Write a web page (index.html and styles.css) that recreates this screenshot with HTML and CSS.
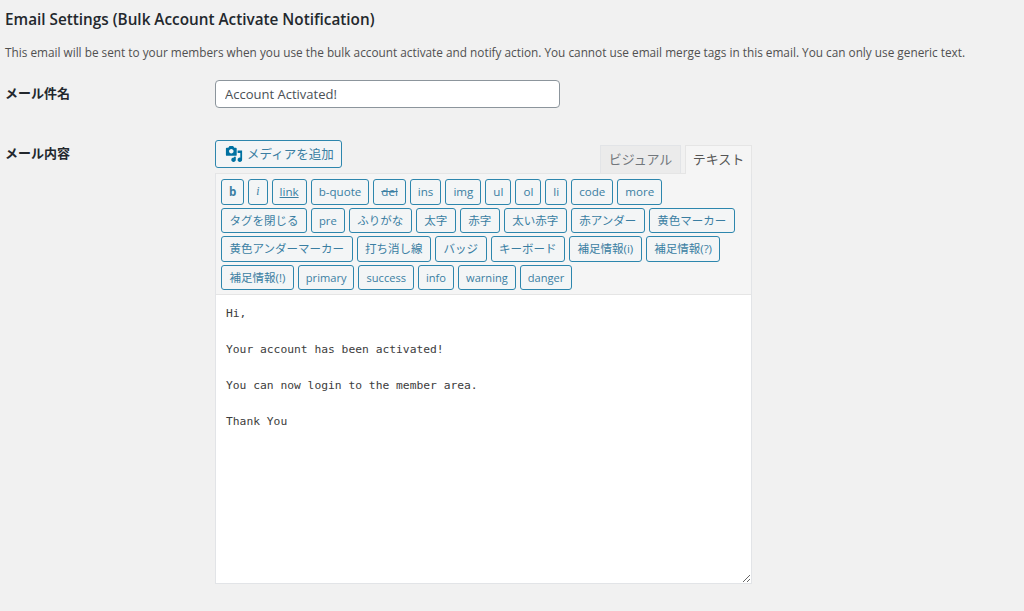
FILE: index.html
```html
<!DOCTYPE html>
<html lang="ja">
<head>
<meta charset="utf-8">
<title>Email Settings</title>
<link rel="stylesheet" href="styles.css">
</head>
<body>
<h2 class="title">Email Settings (Bulk Account Activate Notification)</h2>
<p class="desc">This email will be sent to your members when you use the bulk account activate and notify action. You cannot use email merge tags in this email. You can only use generic text.</p>
<div class="form-row subject-row">
  <label class="field-label">メール件名</label>
  <input class="subject" type="text" value="Account Activated!">
</div>
<div class="form-row">
  <label class="field-label body-label">メール内容</label>
  <div class="editor">
    <div class="editor-head">
      <button class="media-btn" type="button">
        <svg class="media-icon" viewBox="0 0 20 20" width="18" height="18" aria-hidden="true"><path d="M13 11V4c0-.55-.45-1-1-1h-1.670L9 1H5L3.670 3H2c-.55 0-1 .45-1 1v7c0 .55.45 1 1 1h10c.55 0 1-.45 1-1zM7 4.500c1.380 0 2.500 1.120 2.500 2.500S8.380 9.500 7 9.500 4.500 8.380 4.500 7 5.620 4.500 7 4.500zM14 6h5v10.500c0 1.380-1.120 2.500-2.500 2.500S14 17.880 14 16.500s1.120-2.500 2.500-2.500c.17 0 .34.020.5.050V9h-3V6zm-4 8.050V13h2v3.500c0 1.380-1.120 2.500-2.500 2.500S7 17.880 7 16.500 8.120 14 9.500 14c.17 0 .34.020.5.050z" fill="#0071a1"/></svg>
        <span>メディアを追加</span>
      </button>
      <div class="tabs">
        <span class="tab">ビジュアル</span>
        <span class="tab active">テキスト</span>
      </div>
    </div>
    <div class="box">
      <div class="toolbar">
        <div class="tb-row first">
          <button class="qt bold" type="button">b</button>
          <button class="qt ital" type="button">i</button>
          <button class="qt under" type="button">link</button>
          <button class="qt" type="button">b-quote</button>
          <button class="qt strike" type="button">del</button>
          <button class="qt" type="button">ins</button>
          <button class="qt" type="button">img</button>
          <button class="qt" type="button">ul</button>
          <button class="qt" type="button">ol</button>
          <button class="qt" type="button">li</button>
          <button class="qt" type="button">code</button>
          <button class="qt" type="button">more</button>
        </div>
        <div class="tb-row">
          <button class="qt jp" type="button">タグを閉じる</button>
          <button class="qt" type="button">pre</button>
          <button class="qt jp" type="button">ふりがな</button>
          <button class="qt jp" type="button">太字</button>
          <button class="qt jp" type="button">赤字</button>
          <button class="qt jp" type="button">太い赤字</button>
          <button class="qt jp" type="button">赤アンダー</button>
          <button class="qt jp" type="button">黄色マーカー</button>
        </div>
        <div class="tb-row">
          <button class="qt jp" type="button">黄色アンダーマーカー</button>
          <button class="qt jp" type="button">打ち消し線</button>
          <button class="qt jp" type="button">バッジ</button>
          <button class="qt jp" type="button">キーボード</button>
          <button class="qt jp" type="button">補足情報(i)</button>
          <button class="qt jp" type="button">補足情報(?)</button>
        </div>
        <div class="tb-row last">
          <button class="qt jp" type="button">補足情報(!)</button>
          <button class="qt" type="button">primary</button>
          <button class="qt" type="button">success</button>
          <button class="qt" type="button">info</button>
          <button class="qt" type="button">warning</button>
          <button class="qt" type="button">danger</button>
        </div>
      </div>
      <textarea class="content" spellcheck="false">Hi,

Your account has been activated!

You can now login to the member area.

Thank You</textarea>
    </div>
  </div>
</div>
</body>
</html>
```
FILE: styles.css
```css
* { box-sizing: border-box; }
html, body { margin: 0; height: 611px; overflow: hidden; }
body {
  background: #f1f1f1;
  color: #444;
  font-family: "Open Sans", "Noto Sans CJK JP", sans-serif;
  font-size: 12px;
  padding: 0 0 0 5px;
}
.title {
  margin: 0;
  padding-top: 10px;
  font-size: 15.300px;
  line-height: 18px;
  font-weight: 600;
  color: #23282d;
}
.desc {
  margin: 16px 0 0;
  font-size: 11.800px;
  line-height: 16px;
  color: #505050;
  white-space: nowrap;
}
.form-row { display: flex; }
.subject-row { margin-top: 20px; height: 60px; }
.field-label {
  width: 210px;
  flex: none;
  font-size: 13px;
  font-weight: 700;
  line-height: 26px;
  color: #23282d;
}
.subject {
  width: 345px;
  height: 28px;
  border: 1px solid #8c959c;
  border-radius: 4px;
  background: #fff;
  padding: 0 9px;
  font: 13px/26px "Open Sans", sans-serif;
  color: #4a5055;
}
.editor { width: 537px; }
.editor-head { display: flex; justify-content: space-between; align-items: flex-end; height: 33px; }
.media-btn {
  display: flex;
  align-items: center;
  gap: 4px;
  width: 127px;
  height: 28px;
  margin-bottom: 5px;
  padding: 1px 0 0 9px;
  border: 1px solid #2d86ad;
  border-radius: 3px;
  background: #f3f5f6;
  color: #3a7ea2;
  font: 12.500px/26px "Open Sans", "Noto Sans CJK JP", sans-serif;
}
.media-icon { flex: none; margin-top: -1px; }
.tabs { display: flex; gap: 4px; }
.tab {
  width: 81px;
  height: 28px;
  background: #ebebeb;
  border: 1px solid #e2e4e7;
  border-bottom: 0;
  font-size: 13px;
  line-height: 26px;
  text-align: center;
  color: #72777c;
}
.tab.active {
  width: 67px;
  height: 29px;
  margin-bottom: -1px;
  background: #f5f5f5;
  border-color: #e5e5e5;
  color: #555;
  position: relative;
}
.box {
  border: 1px solid #e2e4e7;
  border-top-color: #e5e5e5;
  background: #f5f5f5;
}
.toolbar {
  padding: 5px 5px 4px;
  border-bottom: 1px solid #e5e5e5;
  display: flex;
  flex-direction: column;
  gap: 3px;
}
.tb-row { display: flex; gap: 4px; }
.qt {
  height: 25.500px;
  padding: 0 7px 2px;
  border: 1px solid #2d86ad;
  border-radius: 3px;
  background: #f3f5f6;
  color: #3a7ea2;
  font: 11.200px/23px "Open Sans", "Noto Sans CJK JP", sans-serif;
  white-space: nowrap;
}
.first .qt { font-size: 11.600px; }
.last .qt { font-size: 11.100px; }
.tb-row .jp { font-size: 11.500px; padding-left: 7.500px; padding-right: 7.500px; }
.first .bold { font-weight: 700; }
.first .ital { font-style: italic; font-family: "Liberation Serif", serif; }
.under { text-decoration: underline; }
.strike { text-decoration: line-through; }
.content {
  display: block;
  width: 100%;
  height: 288px;
  border: 0;
  outline: 0;
  margin: 0;
  padding: 10px 10px 8px;
  background: #fff;
  color: #3c3c3c;
  font: 11.300px/18px "DejaVu Sans Mono", monospace;
  resize: vertical;
}
```
